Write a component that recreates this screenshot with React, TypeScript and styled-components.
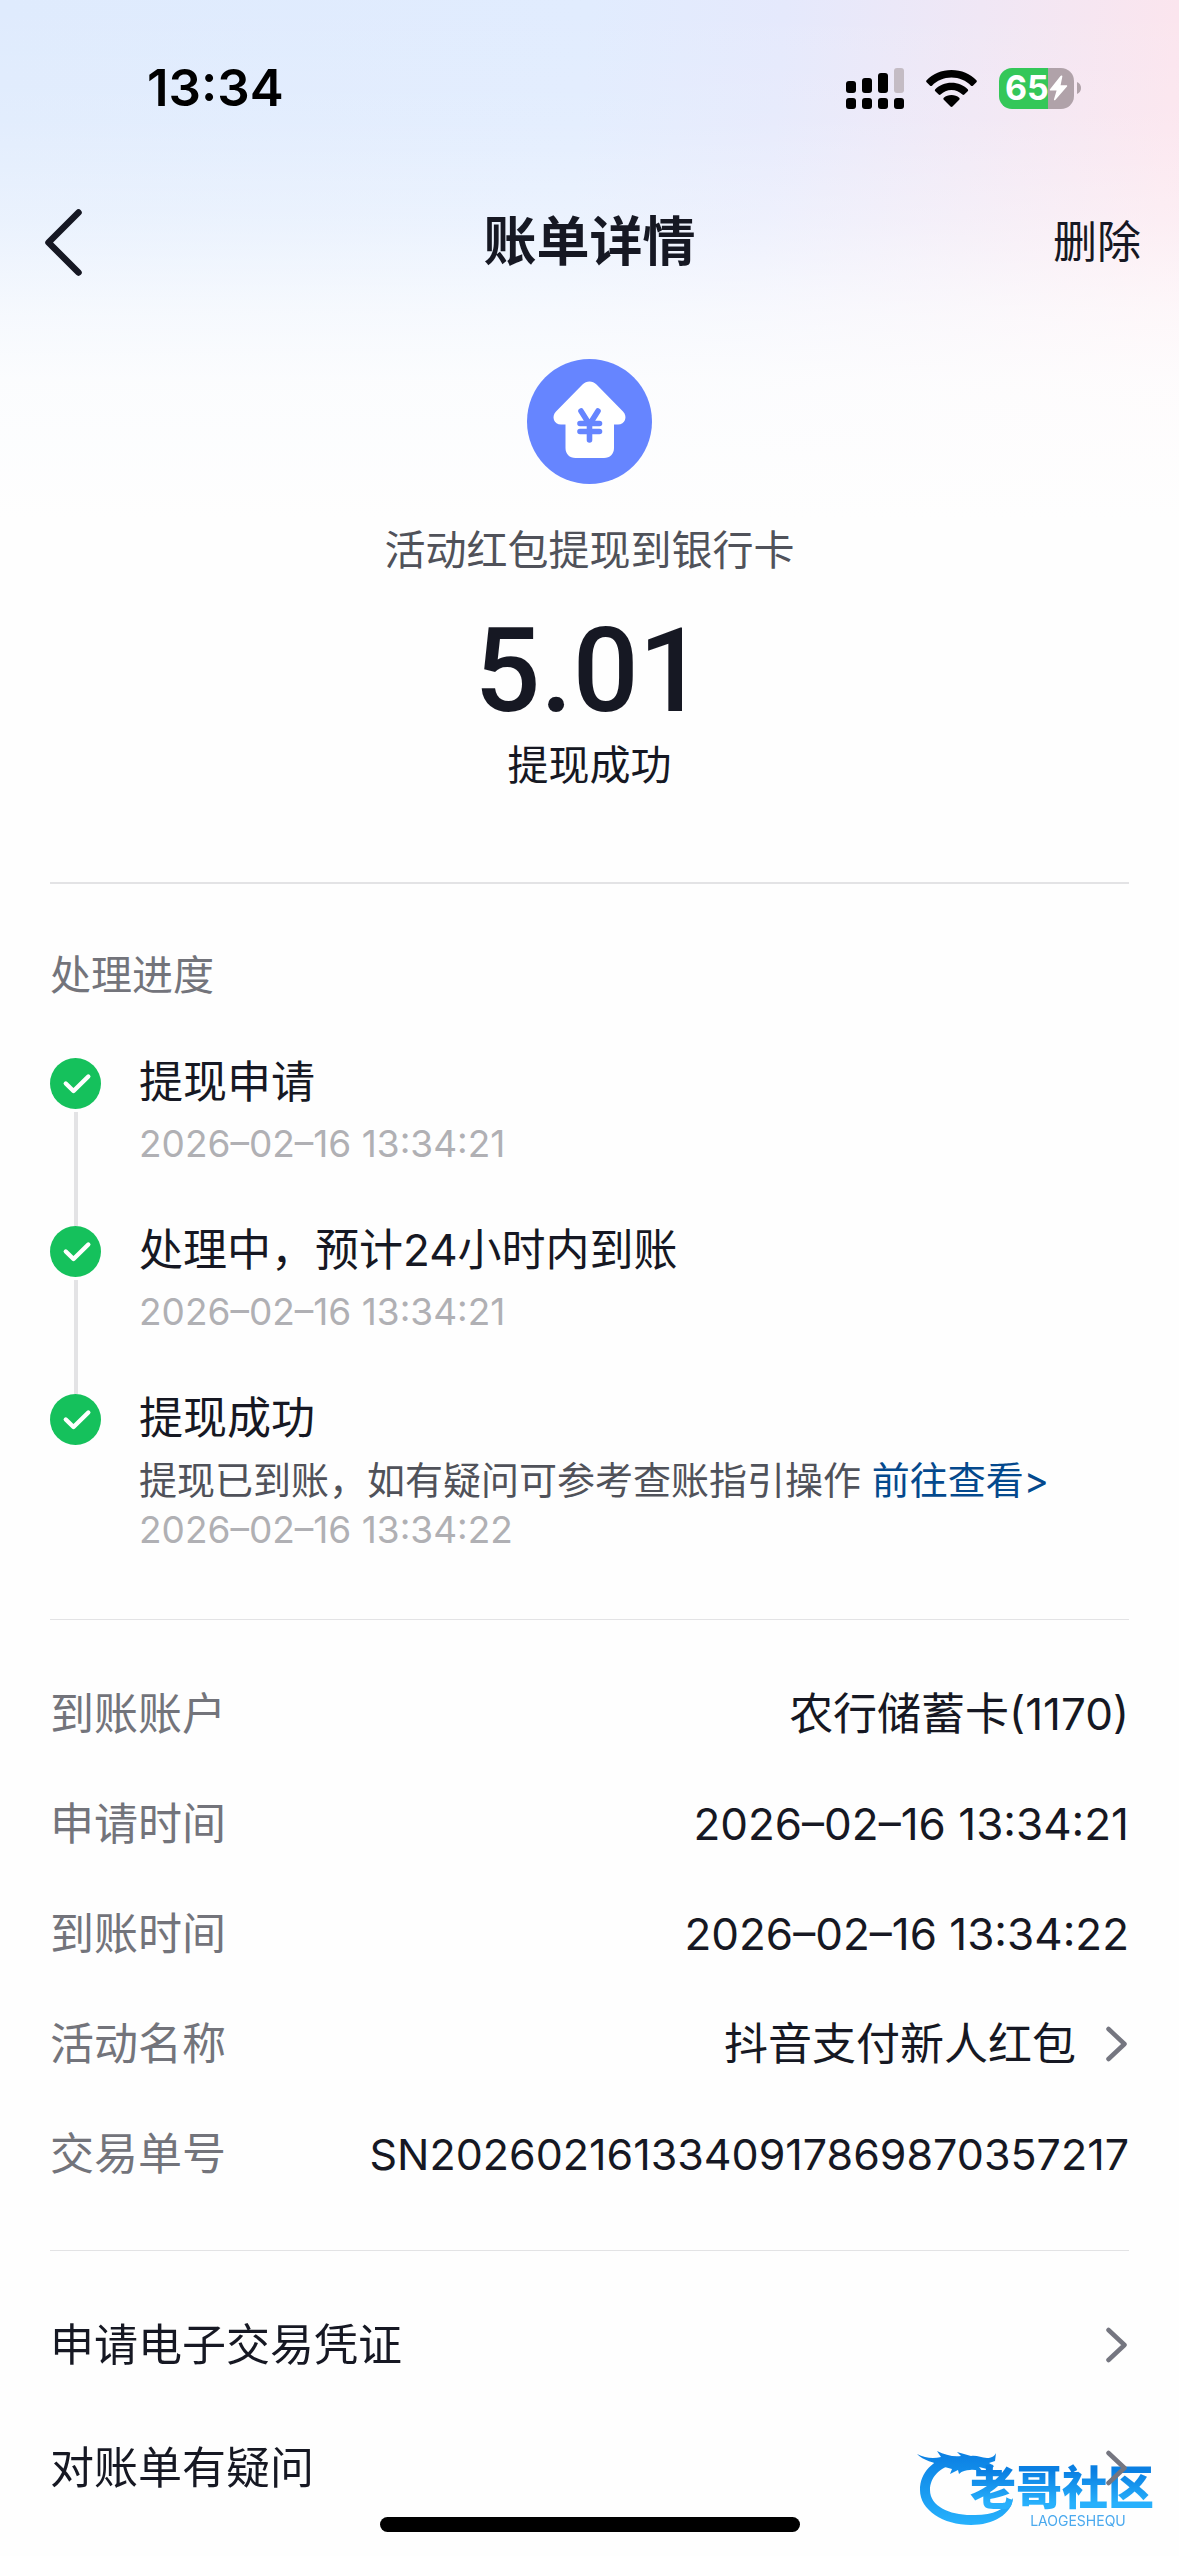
import React from 'react';
import styled, { createGlobalStyle } from 'styled-components';

const ink = '#161823';
const muted = '#73747b';
const faint = '#b0b0b4';
const line = '#e3e3e5';

const GlobalStyle = createGlobalStyle`
  *, *::before, *::after { box-sizing: border-box; }
  body {
    margin: 0;
    background: #fefefe;
    color: ${ink};
    font-family: Inter, "Noto Sans CJK SC", sans-serif;
    font-size: 44px;
  }
  h1, h2, p, ol, ul, dl, dd, dt { margin: 0; padding: 0; font-weight: 400; }
  button { border: 0; background: none; padding: 0; margin: 0; font: inherit; color: inherit; cursor: pointer; }
`;

const Page = styled.div`
  position: relative;
  min-height: 100vh;
  overflow: hidden;
  background:
    linear-gradient(180deg, rgba(254, 254, 254, 0) 0, rgba(254, 254, 254, 0.1) 120px, rgba(254, 254, 254, 0.36) 220px, rgba(254, 254, 254, 0.72) 310px, rgba(254, 254, 254, 0.9) 380px, #fefefe 520px),
    linear-gradient(95deg, #dfebfd 0%, #e1ecfe 42%, #e5e9fc 56%, #fbe5ee 84%, #ffe2ea 100%);
`;

const StatusBar = styled.div`
  display: flex;
  align-items: center;
  justify-content: space-between;
  height: 176px;
  padding: 0 98px 0 147px;
`;

const Clock = styled.time`
  color: #000;
  font-size: 51px;
  font-weight: 600;
  line-height: 60px;
`;

const StatusIcons = styled.div`
  display: flex;
  align-items: center;
  gap: 22px;
`;

const Battery = styled.div`
  display: flex;
  align-items: center;
  gap: 3px;
`;

const BatteryBody = styled.div`
  display: flex;
  align-items: center;
  width: 75px;
  height: 41px;
  padding-left: 6px;
  border-radius: 13px;
  background: linear-gradient(90deg, #34c759 0 65%, #b0a2a9 65%);
  color: #fff;
  font-size: 34px;
  font-weight: 700;
  line-height: 40px;
`;

const NavBar = styled.header`
  display: grid;
  grid-template-columns: 1fr auto 1fr;
  align-items: center;
  height: 132px;
  padding: 0 38px;
`;

const BackButton = styled.button`
  display: flex;
  justify-self: start;
  padding-left: 5px;
`;

const DeleteButton = styled.button`
  justify-self: end;
  font-size: 44px;
  line-height: 52px;
`;

const Title = styled.h1`
  font-size: 53px;
  font-weight: 600;
  line-height: 64px;
`;

const Content = styled.main`
  padding: 0 50px;
`;

const Summary = styled.section`
  display: flex;
  flex-direction: column;
  align-items: center;
  padding: 51px 0 89px;
  border-bottom: 2px solid ${line};
`;

const SummaryText = styled.p<{ $tone?: string }>`
  color: ${(p) => p.$tone ?? ink};
  font-size: 41px;
  line-height: 56px;
`;

const SummaryLabel = styled(SummaryText)`
  margin: 38px 0 33px;
`;

const Amount = styled.p`
  margin-bottom: 6px;
  font-family: Roboto, sans-serif;
  font-size: 116px;
  font-weight: 500;
  line-height: 120px;
`;

const Progress = styled.section`
  padding: 63px 0 64px;
  border-bottom: 1px solid ${line};
`;

const SectionTitle = styled.h2`
  margin-bottom: 53px;
  color: ${muted};
  font-size: 41px;
  line-height: 56px;
`;

const Steps = styled.ol`
  list-style: none;
`;

const Step = styled.li`
  display: flex;
  gap: 38px;
`;

const Rail = styled.div`
  display: flex;
  flex-direction: column;
  align-items: center;
  gap: 3px;
  width: 51px;
  padding-top: 2px;
`;

const Connector = styled.span`
  flex: 1;
  width: 4px;
  margin-bottom: -2px;
  background: ${line};
`;

const StepBody = styled.div<{ $last: boolean }>`
  flex: 1;
  padding-bottom: ${(p) => (p.$last ? 0 : 55)}px;
`;

const StepTitle = styled.p`
  margin-bottom: 11px;
  font-size: 44px;
  line-height: 52px;
`;

const StepNote = styled.p`
  color: #50525a;
  font-size: 38px;
  line-height: 50px;
`;

const StepTime = styled.time`
  display: block;
  color: ${faint};
  font-size: 37px;
  line-height: 50px;
`;

const HelpLink = styled.a`
  color: #04498d;
  text-decoration: none;
`;

const Details = styled.dl`
  padding: 39px 0 41px;
  border-bottom: 1px solid ${line};
`;

const DetailRow = styled.div`
  display: flex;
  align-items: center;
  justify-content: space-between;
  height: 110px;
  line-height: 52px;
`;

const DetailLabel = styled.dt`
  color: ${muted};
`;

const DetailValue = styled.dd<{ $serial?: boolean }>`
  font-size: ${(p) => (p.$serial ? 43 : 44)}px;
`;

const DetailButton = styled.button`
  display: flex;
  align-items: center;
  gap: 28px;
`;

const Links = styled.nav`
  position: relative;
  z-index: 1;
  padding-top: 32px;
`;

const LinkRow = styled.button`
  display: flex;
  align-items: center;
  justify-content: space-between;
  width: 100%;
  height: 123px;
  line-height: 52px;
  text-align: left;
`;

const HomeIndicator = styled.div`
  position: fixed;
  z-index: 2;
  bottom: 24px;
  left: 50%;
  width: 420px;
  height: 15px;
  border-radius: 8px;
  background: #000;
  transform: translateX(-50%);
`;

const Watermark = styled.div`
  position: fixed;
  right: 18px;
  bottom: 28px;
  display: flex;
  width: 246px;
  height: 88px;
`;

const WatermarkArt = styled.svg`
  position: absolute;
  inset: 0;
`;

const WatermarkText = styled.div`
  position: relative;
  flex: 1;
  padding: 24px 0 0 48px;
  text-align: center;
`;

const WatermarkName = styled.p`
  margin-bottom: 4px;
  background: linear-gradient(180deg, #0a7fe2 15%, #27b0fc 85%);
  background-clip: text;
  -webkit-background-clip: text;
  color: transparent;
  font-size: 46px;
  font-weight: 900;
  line-height: 46px;
`;

const WatermarkCaption = styled.p`
  padding-left: 32px;
  color: #4aa9ee;
  font-size: 14px;
  line-height: 14px;
`;

const SignalIcon = () => (
  <svg width="58" height="41" viewBox="0 0 58 41" aria-hidden="true">
    <rect x="0" y="13" width="10" height="12" rx="3" />
    <rect x="16" y="10" width="10" height="15" rx="3" />
    <rect x="32" y="5" width="10" height="20" rx="3" />
    <rect x="48" y="0" width="10" height="25" rx="3" fill="#c4bcc4" />
    {[0, 16, 32, 48].map((x) => (
      <rect key={x} x={x} y="30" width="10" height="11" rx="3" />
    ))}
  </svg>
);

const WifiIcon = () => (
  <svg width="51" height="37" viewBox="0 0 51 37" aria-hidden="true">
    <path d="M25.500 0C35.500 0 44.400 3.900 50.400 10.200c.6.6.6 1.400 0 2l-3.500 3.500c-.5.5-1.300.5-1.900 0C40 10.600 33.100 7.600 25.500 7.600S11 10.600 6 15.700c-.6.5-1.400.5-1.900 0L.6 12.200c-.6-.6-.6-1.400 0-2C6.600 3.900 15.500 0 25.500 0z" />
    <path d="M25.500 12.700c6.500 0 12.100 2.500 16.200 6.500.6.600.6 1.400 0 2l-3.400 3.400c-.5.5-1.300.5-1.900 0-2.800-2.700-6.600-4.500-10.900-4.500s-8.100 1.800-10.900 4.500c-.6.500-1.400.5-1.900 0l-3.400-3.400c-.6-.6-.6-1.400 0-2 4.100-4 9.700-6.500 16.200-6.500z" />
    <path d="M25.500 25c3 0 5.700 1 7.700 2.800.6.500.6 1.400 0 2l-6.700 6.700c-.6.600-1.400.6-2 0l-6.700-6.700c-.6-.6-.6-1.500 0-2 2-1.800 4.700-2.800 7.700-2.800z" />
  </svg>
);

const BoltIcon = () => (
  <svg width="19" height="26" viewBox="0 0 19 26" aria-hidden="true">
    <path d="M11.500 1 1 14.200c-.5.700-.2 1.300.6 1.300h6L5 24.200c-.3 1.200.7 1.600 1.500.6L18 11.600c.5-.7.200-1.400-.6-1.400h-5.800L13.300 1.800C13.600.5 12.400 0 11.500 1z" fill="#fff" />
  </svg>
);

const BackIcon = () => (
  <svg width="42" height="68" viewBox="0 0 42 68" aria-hidden="true">
    <path d="M35.500 4.500 5.500 34.500 35.500 64.500" fill="none" stroke={ink} strokeWidth="6.500" strokeLinecap="round" strokeLinejoin="round" />
  </svg>
);

const ChevronIcon = () => (
  <svg width="25" height="36" viewBox="0 0 25 36" aria-hidden="true">
    <path d="M4.500 3 20.500 18 4.500 33" fill="none" stroke="#757680" strokeWidth="4.500" strokeLinecap="round" strokeLinejoin="round" />
  </svg>
);

const HouseIcon = () => (
  <svg width="125" height="125" viewBox="0 0 125 125" aria-hidden="true">
    <circle cx="62.500" cy="62.500" r="62.500" fill="#6685ff" />
    <path d="M55.500 25.500c4-4 10-4 14 0L96 52.500c5 5 2 13-5 13h-4V89c0 6-4 10-10 10H48.500c-6 0-10-4-10-10V65.500H34c-7 0-10-8-5-13z" fill="#fff" />
    <path d="M54 52l8.500 13.500L71 52M62.500 65.500V81M53 64.500h19.500M53 72.500h19.500" fill="none" stroke="#6685ff" strokeWidth="5.600" strokeLinecap="round" strokeLinejoin="round" />
  </svg>
);

const CheckIcon = () => (
  <svg width="51" height="51" viewBox="0 0 51 51" aria-hidden="true">
    <circle cx="25.500" cy="25.500" r="25.500" fill="#15c15c" />
    <path d="M15.800 25.500 23.500 33 38.300 18.500" fill="none" stroke="#fff" strokeWidth="4.400" strokeLinecap="round" strokeLinejoin="round" />
  </svg>
);

const DragonMark = () => (
  <WatermarkArt width="246" height="88" viewBox="0 0 246 88" aria-hidden="true">
    <defs>
      <linearGradient id="dragon" gradientUnits="userSpaceOnUse" x1="0" y1="14" x2="0" y2="86">
        <stop offset="0" stopColor="#0b80e3" />
        <stop offset="1" stopColor="#27b2fd" />
      </linearGradient>
    </defs>
    <path fill="url(#dragon)" d="M36 16C18 20 5 32 5 50c0 20 23 35 51 35 22 0 41-11 42-27-8 12-22 18-42 17-22 0-41-9-41-25 0-12 9-23 25-26z" />
    <path fill="url(#dragon)" d="M2 14c8 4 16 5 24 3l-4-6c8 4 16 6 24 5l-4-4 14 4c6-1 10 2 16 2 4 0 8-2 9-5l-1 8-6 2 5 3-3 4-12-3 4 5c-5-1-8-3-13-2-4 0-8 1-11 4l-1-4-8 4 2-5-11-3C20 22 8 21 2 14z" />
  </WatermarkArt>
);

interface StepData {
  title: string;
  time: string;
  note?: string;
  link?: string;
}

interface DetailData {
  label: string;
  value: string;
  opens?: boolean;
  serial?: boolean;
}

const steps: StepData[] = [
  { title: '提现申请', time: '2026–02–16 13:34:21' },
  { title: '处理中，预计24小时内到账', time: '2026–02–16 13:34:21' },
  {
    title: '提现成功',
    time: '2026–02–16 13:34:22',
    note: '提现已到账，如有疑问可参考查账指引操作',
    link: '前往查看>',
  },
];

const details: DetailData[] = [
  { label: '到账账户', value: '农行储蓄卡(1170)' },
  { label: '申请时间', value: '2026–02–16 13:34:21' },
  { label: '到账时间', value: '2026–02–16 13:34:22' },
  { label: '活动名称', value: '抖音支付新人红包', opens: true },
  { label: '交易单号', value: 'SN2026021613340917869870357217', serial: true },
];

const links = ['申请电子交易凭证', '对账单有疑问'];

export default function App() {
  return (
    <>
      <GlobalStyle />
      <Page>
        <StatusBar>
          <Clock>13:34</Clock>
          <StatusIcons>
            <SignalIcon />
            <WifiIcon />
            <Battery>
              <BatteryBody>
                65
                <BoltIcon />
              </BatteryBody>
              <svg width="4" height="12" viewBox="0 0 4 12" aria-hidden="true">
                <path d="M0 0c2.500 1 4 3 4 6s-1.500 5-4 6z" fill="#b0a2a9" />
              </svg>
            </Battery>
          </StatusIcons>
        </StatusBar>
        <NavBar>
          <BackButton type="button" aria-label="返回">
            <BackIcon />
          </BackButton>
          <Title>账单详情</Title>
          <DeleteButton type="button">删除</DeleteButton>
        </NavBar>
        <Content>
          <Summary>
            <HouseIcon />
            <SummaryLabel $tone="#50525a">活动红包提现到银行卡</SummaryLabel>
            <Amount>5.01</Amount>
            <SummaryText>提现成功</SummaryText>
          </Summary>
          <Progress>
            <SectionTitle>处理进度</SectionTitle>
            <Steps>
              {steps.map((step, i) => {
                const last = i === steps.length - 1;
                return (
                  <Step key={step.title}>
                    <Rail>
                      <CheckIcon />
                      {!last && <Connector />}
                    </Rail>
                    <StepBody $last={last}>
                      <StepTitle>{step.title}</StepTitle>
                      {step.note && (
                        <StepNote>
                          {step.note} <HelpLink href="#guide">{step.link}</HelpLink>
                        </StepNote>
                      )}
                      <StepTime>{step.time}</StepTime>
                    </StepBody>
                  </Step>
                );
              })}
            </Steps>
          </Progress>
          <Details>
            {details.map((row) => (
              <DetailRow key={row.label}>
                <DetailLabel>{row.label}</DetailLabel>
                <DetailValue $serial={row.serial}>
                  {row.opens ? (
                    <DetailButton type="button">
                      {row.value}
                      <ChevronIcon />
                    </DetailButton>
                  ) : (
                    row.value
                  )}
                </DetailValue>
              </DetailRow>
            ))}
          </Details>
          <Links>
            {links.map((label) => (
              <LinkRow key={label} type="button">
                {label}
                <ChevronIcon />
              </LinkRow>
            ))}
          </Links>
        </Content>
        <Watermark>
          <DragonMark />
          <WatermarkText>
            <WatermarkName>老哥社区</WatermarkName>
            <WatermarkCaption>LAOGESHEQU</WatermarkCaption>
          </WatermarkText>
        </Watermark>
        <HomeIndicator />
      </Page>
    </>
  );
}
